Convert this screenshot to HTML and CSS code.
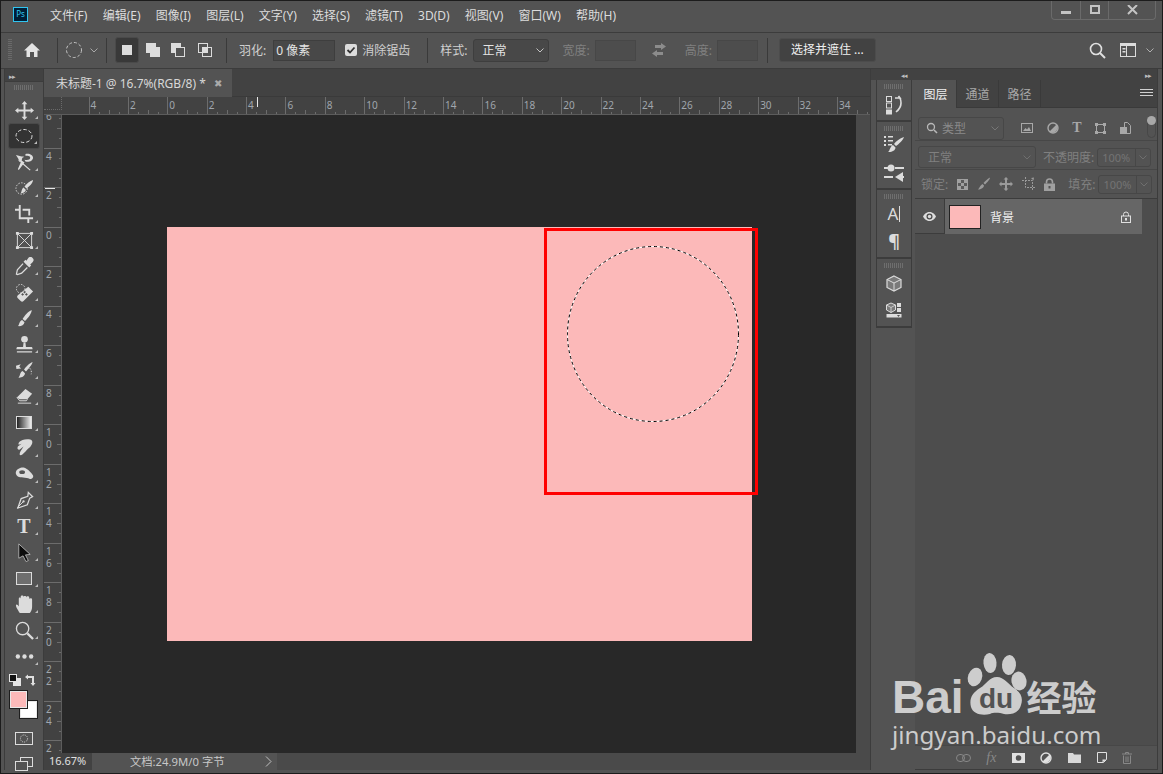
FILE: index.html
```html
<!DOCTYPE html>
<html lang="zh-CN">
<head>
  <meta charset="UTF-8">
  <meta name="viewport" content="width=device-width, initial-scale=1.0">
  <title>Photoshop</title>
  <link rel="stylesheet" href="styles.css">
</head>
<body>
  <div class="window">
    <!-- menu bar -->
    <header class="menubar">
      <div class="ps-logo">Ps</div>
      <nav class="menu">
        <span>文件(F)</span><span>编辑(E)</span><span>图像(I)</span><span>图层(L)</span><span>文字(Y)</span><span>选择(S)</span><span>滤镜(T)</span><span>3D(D)</span><span>视图(V)</span><span>窗口(W)</span><span>帮助(H)</span>
      </nav>
      <div class="win-controls">
        <span><svg width="10" height="10" viewBox="0 0 10 10"><rect y="6" width="10" height="3" fill="#c4c4c4"/></svg></span>
        <span><svg width="10" height="10" viewBox="0 0 10 10"><rect x="1" y="1" width="8" height="7" fill="none" stroke="#c4c4c4" stroke-width="2"/></svg></span>
        <span><svg width="11" height="10" viewBox="0 0 11 10"><path d="M1 0l9 9M10 0l-9 9" stroke="#c4c4c4" stroke-width="2"/></svg></span>
      </div>
    </header>

    <!-- options bar -->
    <div class="options">
      <div class="grip-v"></div>
      <svg class="ml-11" width="18" height="18" viewBox="0 0 18 18"><path d="M9 2l8 7.500h-2.500V16h-3.500v-5H7v5H3.500V9.500H1z" fill="#e4e4e4"/></svg>
      <div class="sep ml-16"></div>
      <svg class="ml-7" width="18" height="18" viewBox="0 0 18 18"><circle cx="9" cy="9" r="7.500" fill="none" stroke="#c4c4c4" stroke-dasharray="3 2"/></svg>
      <svg class="ml-6 chev" width="10" height="10" viewBox="0 0 10 10"><path d="M1.500 3.500L5 7l3.500-3.500" fill="none" stroke="#a8a8a8"/></svg>
      <div class="sep ml-7"></div>
      <div class="mode-active ml-8"><i></i></div>
      <svg class="ml-6" width="16" height="16" viewBox="0 0 16 16"><rect x="1" y="1" width="10" height="10" fill="#dcdcdc"/><rect x="5" y="5" width="10" height="10" fill="#dcdcdc"/></svg>
      <svg class="ml-9" width="16" height="16" viewBox="0 0 16 16"><rect x="1" y="1" width="10" height="10" fill="#dcdcdc"/><rect x="5.500" y="5.500" width="9" height="9" fill="#535353" stroke="#dcdcdc"/></svg>
      <svg class="ml-11" width="16" height="16" viewBox="0 0 16 16"><rect x="1.500" y="1.500" width="9" height="9" fill="none" stroke="#dcdcdc"/><rect x="5.500" y="5.500" width="9" height="9" fill="none" stroke="#dcdcdc"/><rect x="5" y="5" width="6" height="6" fill="#dcdcdc"/></svg>
      <div class="sep ml-13"></div>
      <span class="label ml-12">羽化:</span>
      <div class="field feather ml-7">0 像素</div>
      <div class="check ml-10"><svg width="10" height="10" viewBox="0 0 10 10"><path d="M1.500 5l2.500 2.500 4.500-5" fill="none" stroke="#333" stroke-width="1.800"/></svg></div>
      <span class="label ml-5">消除锯齿</span>
      <div class="sep ml-17"></div>
      <span class="label ml-12">样式:</span>
      <div class="select style-select ml-6">正常<svg width="10" height="10" viewBox="0 0 10 10"><path d="M1.500 3.500L5 7l3.500-3.500" fill="none" stroke="#c4c4c4"/></svg></div>
      <span class="label off ml-13">宽度:</span>
      <div class="field size ml-5"></div>
      <svg class="ml-14" width="18" height="16" viewBox="0 0 18 16"><path d="M11 1l5 3.500L11 8V6H5V3h6zM7 8v2h6v3H7v2l-5-3.500z" fill="#8c8c8c"/></svg>
      <span class="label off ml-17">高度:</span>
      <div class="field size ml-5"></div>
      <div class="sep ml-9"></div>
      <div class="refine ml-11">选择并遮住 ...</div>
      <div class="options-right">
        <svg width="17" height="17" viewBox="0 0 17 17"><circle cx="7" cy="7" r="5.500" fill="none" stroke="#e0e0e0" stroke-width="1.600"/><path d="M11 11l5 5" stroke="#e0e0e0" stroke-width="2"/></svg>
        <svg class="ml-14" width="16" height="14" viewBox="0 0 16 14"><rect x=".5" y=".5" width="15" height="13" fill="none" stroke="#dcdcdc"/><rect y="0" width="16" height="3" fill="#dcdcdc"/><rect x="2.500" y="5" width="3" height="1.500" fill="#dcdcdc"/><rect x="2.500" y="8" width="3" height="1.500" fill="#dcdcdc"/><path d="M6.500 3v10" stroke="#dcdcdc"/></svg>
        <svg class="ml-9" width="10" height="10" viewBox="0 0 10 10"><path d="M1.500 3.500L5 7l3.500-3.500" fill="none" stroke="#b0b0b0"/></svg>
      </div>
    </div>

    <div class="workspace">
      <!-- tool bar -->
      <aside class="tools">
        <div class="collapse-bar"><span class="arrows">▸▸</span></div>
        <div class="grip-h"></div>
        <div class="tool"><svg viewBox="0 0 20 20"><path d="M10 0l3 3.500h-2V9h5.500V7l3.500 3-3.500 3v-2H11v5.500h2L10 20l-3-3.500h2V11H3.500v2L0 10l3.500-3v2H9V3.500H7z"/></svg></div>
        <div class="tool active"><svg viewBox="0 0 20 20"><ellipse cx="10" cy="10" rx="8" ry="6.500" fill="none" stroke="currentColor" stroke-width="1" stroke-dasharray="3.500 2"/></svg></div>
        <div class="tool"><svg viewBox="0 0 20 20"><path d="M1 2l7 2-1 4 3 2-6 8-1-1 3-7z"/><path d="M11 1c4-1 8 1 8 4s-4 5-8 4l-1-2c3 1 6 0 6-2s-3-2-5-2z"/><path d="M9 4C5 5 3 7 5 9M8 11l8 7" fill="none" stroke="currentColor" stroke-width="1.200"/></svg></div>
        <div class="tool"><svg viewBox="0 0 20 20"><circle cx="7" cy="10" r="6" fill="none" stroke="currentColor" stroke-dasharray="1.500 1.500"/><path d="M19 1c0 3-4 7-7 9l-2-2c2-3 6-6 9-7zM9 9l2.500 2.500C11 14 8 15 6 15c1-1 1-5 3-6z"/></svg></div>
        <div class="tool"><svg viewBox="0 0 20 20"><path d="M4 0h2v13h13v2H15v4h-2v-4H4V6H0V4h4zM8 4h8v7h-2V6H8z"/></svg></div>
        <div class="tool"><svg viewBox="0 0 20 20"><rect x="2.500" y="2.500" width="15" height="15" fill="none" stroke="currentColor"/><path d="M2.500 2.500l15 15M17.500 2.500l-15 15" stroke="currentColor"/><path d="M1 1h3v3H1zM16 1h3v3h-3zM1 16h3v3H1zM16 16h3v3h-3z"/></svg></div>
        <div class="tool"><svg viewBox="0 0 20 20"><path d="M14 1a3 3 0 0 1 4.500 4.500L16 8l1 1-2 2-6-6 2-2 1 1z"/><path d="M8.500 7L2.500 13.500 1.500 18l1 .5 4.500-1.500L13 11" fill="none" stroke="currentColor" stroke-width="1.300"/></svg></div>
        <div class="tool"><svg viewBox="0 0 20 20"><path d="M14 4l5 5-10 10c-1 1-2 1-3 0l-3-3c-1-1-1-2 0-3zM10 8l-1.500 1.500L10 11l1.500-1.500zM8 10.500L6.500 12 8 13.500 9.500 12zM12 10.500L10.500 12 12 13.500l1.500-1.500z" fill-rule="evenodd"/><circle cx="6" cy="6" r="4.500" fill="none" stroke="currentColor" stroke-dasharray="1.500 1.500"/></svg></div>
        <div class="tool"><svg viewBox="0 0 20 20"><path d="M17.500 1c.5 3-4 9-7 11.500L8 10.500c2-3.500 6-8 9.500-9.500zM7.500 11.500l2.500 2.500c-.5 3-4 4.500-7 4 1.500-1 1.500-5.500 4.500-6.500z"/></svg></div>
        <div class="tool"><svg viewBox="0 0 20 20"><circle cx="10" cy="4.500" r="3.500"/><path d="M9 8h2l.5 4.500H17c1 0 1.500.5 1.500 2.500h-17c0-2 .5-2.500 1.500-2.500h5.500zM2 17h16v1.500H2z"/></svg></div>
        <div class="tool"><svg viewBox="0 0 20 20"><path d="M18.500 1c-.5 3-5 8-7 10l-2-2c2-3 6-7 9-8zM8 10.500l2.500 2.500c0 3-4 5-7 4.500 2-1 1.500-6 4.500-7z"/><path d="M1 5l5-1.500-1.500 2.500 2 2-5 .5"/><path d="M13 6c3 1 5 4 4 8" fill="none" stroke="currentColor" stroke-dasharray="1.500 1.500"/></svg></div>
        <div class="tool"><svg viewBox="0 0 20 20"><path d="M11 2l7 5-5 6H5L2 11z"/><path d="M2 11l3 3.500h7l1-1.500" fill="none" stroke="currentColor"/><path d="M3 17h14" stroke="currentColor"/></svg></div>
        <div class="tool"><div class="gradient-swatch"></div></div>
        <div class="tool"><svg viewBox="0 0 20 20"><path d="M8 1c3-1 9-1 10 1s-1 6-4 8c-2 2-6 7-8 7-2 0-1-3 1-6l2-3-4 3C3 12 2 10 3 8l4-3-3 1C3 4 5 2 8 1z"/></svg></div>
        <div class="tool"><svg viewBox="0 0 20 20"><path d="M1 7c1-3 6-5 9-4s7 5 9 8c1 3-3 5-5 3-2 0-5-1-7-1C3 13 0 10 1 7z"/><ellipse cx="7.500" cy="7.500" rx="3" ry="2" fill="#535353"/></svg></div>
        <div class="tool"><svg viewBox="0 0 20 20"><path d="M14 1.500l4.500 4.500-3 1.500-2.500 7-10 3.500 3.500-10 7-2.500z" fill="none" stroke="currentColor" stroke-width="1.300"/><path d="M2.500 17.500l6-6" stroke="currentColor"/><circle cx="9" cy="11" r="1.200"/></svg></div>
        <div class="tool"><span class="tool-type">T</span></div>
        <div class="tool"><svg viewBox="0 0 20 20"><path d="M4 1l12 11-5 .5 3 6-2.500 1-3-6L4 16z" fill="#0c0c0c" stroke="#dcdcdc" stroke-width=".7"/></svg></div>
        <div class="tool"><div class="rect-swatch"></div></div>
        <div class="tool"><svg viewBox="0 0 20 20"><path d="M5 19c-1-2-4-6-4-8s2-1 3 1V4c0-2 2-2 2 0V2c0-2 3-2 3 0v0c0-1.500 3-1.500 3 .5C12 1 15 1 15 3v1c1-1 3-1 3 1v7c0 4-2 7-3 7z"/></svg></div>
        <div class="tool"><svg viewBox="0 0 20 20"><circle cx="8" cy="8" r="6.500" fill="none" stroke="currentColor" stroke-width="1.400"/><path d="M13 13l6 6" stroke="currentColor" stroke-width="2.400"/></svg></div>
        <div class="tool"><svg viewBox="0 0 20 20"><circle cx="3" cy="10" r="2.300"/><circle cx="10" cy="10" r="2.300"/><circle cx="17" cy="10" r="2.300"/></svg></div>
        <div class="swap-row">
          <svg width="12" height="12" viewBox="0 0 12 12"><rect x="4" y="4" width="8" height="8" fill="#e4e4e4"/><rect x=".5" y=".5" width="7" height="7" fill="#111" stroke="#e4e4e4"/></svg>
          <svg width="12" height="12" viewBox="0 0 12 12"><path d="M1 3l3-2.500V2h6v7h1.500L9 12 6.500 9H8V4H4v1.500z" fill="#e0e0e0"/></svg>
        </div>
        <div class="colors">
          <div class="color-bg"></div>
          <div class="color-fg"></div>
        </div>
        <div class="quickmask"><svg width="18" height="13" viewBox="0 0 18 13"><circle cx="9" cy="6.500" r="4" fill="none" stroke="#dcdcdc" stroke-dasharray="1.200 1.200"/></svg></div>
        <svg class="screenmode" width="18" height="14" viewBox="0 0 18 14"><rect x="5.500" y=".5" width="12" height="9" fill="none" stroke="#dcdcdc"/><rect x=".5" y="4.500" width="12" height="9" fill="#535353" stroke="#dcdcdc"/></svg>
      </aside>

      <!-- document -->
      <section class="doc">
        <div class="doc-tabs">
          <div class="doc-tab">未标题-1 @ 16.7%(RGB/8) *<span class="tab-close">✖</span></div>
        </div>
        <div class="ruler-top">
          <div class="ruler-corner"></div>
          <div class="ruler-h">
            <span>4</span><span>2</span><span>0</span><span>2</span><span>4</span><span>6</span><span>8</span><span>10</span><span>12</span><span>14</span><span>16</span><span>18</span><span>20</span><span>22</span><span>24</span><span>26</span><span>28</span><span>30</span><span>32</span><span>34</span>
            <i class="cursor-h"></i>
          </div>
        </div>
        <div class="doc-mid">
          <div class="ruler-v">
            <span class="first">6</span><span>4</span><span>2</span><span>0</span><span>2</span><span>4</span><span>6</span><span>8</span><span>1<br>0</span><span>1<br>2</span><span>1<br>4</span><span>1<br>6</span><span>1<br>8</span><span>2<br>0</span><span>2<br>2</span><span>2<br>4</span><span>2</span>
            <i class="cursor-v"></i>
          </div>
          <div class="canvas">
            <div class="artboard">
              <svg class="ants" width="180" height="184" viewBox="0 0 180 184">
                <ellipse cx="90" cy="92" rx="85.500" ry="87.500" fill="none" stroke="#fff"/>
                <ellipse cx="90" cy="92" rx="85.500" ry="87.500" fill="none" stroke="#000" stroke-dasharray="3 3"/>
              </svg>
              <div class="red-box"></div>
            </div>
          </div>
          <div class="scroll-v"></div>
        </div>
        <div class="status">
          <div class="zoom-value">16.67%</div>
          <div class="doc-info">文档:24.9M/0 字节<svg width="7" height="11" viewBox="0 0 7 11"><path d="M1 .5L6 5.500 1 10.500" fill="none" stroke="#c0c0c0"/></svg></div>
          <div class="scroll-h"></div>
        </div>
      </section>

      <!-- collapsed panels -->
      <aside class="dock">
        <div class="dock-top"><span class="arrows">◂◂</span></div>
        <div class="dock-group history">
          <div class="grip-h"></div>
          <svg class="dock-icon" width="20" height="20" viewBox="0 0 20 20"><rect x="2.500" y="1.500" width="5" height="5" fill="none" stroke="#dcdcdc"/><rect x="2.500" y="8" width="5" height="5" fill="none" stroke="#dcdcdc"/><rect x="2" y="14.500" width="6" height="5" fill="#dcdcdc"/><path d="M11 3h5l-1.500-2M16 3c2 5 1 10-4 14" fill="none" stroke="#dcdcdc" stroke-width="1.600"/></svg>
        </div>
        <div class="dock-group brushes">
          <div class="grip-h"></div>
          <svg class="dock-icon" width="22" height="20" viewBox="0 0 22 20"><path d="M1 2h2v2H1zM5 2h5v1.500H5zM1 6h2v2H1zM5 6h5v1.500H5zM1 10h2v2H1zM5 10h4v1.500H5zM21 3c-1 3-5 7-8 9l-2-2c2-3 7-6 10-7zM10 11l2.500 2.500c0 3-4 5-7.500 4.500 2-1 2-6 5-7z" fill="#dcdcdc"/></svg>
          <svg class="dock-icon second" width="22" height="18" viewBox="0 0 22 18"><path d="M1 4h4M12 4h9M1 13h9M18 13h3" stroke="#dcdcdc" stroke-width="2"/><circle cx="8" cy="4" r="3.500" fill="#dcdcdc"/><path d="M20 8v10l-8-5z" fill="#dcdcdc"/></svg>
        </div>
        <div class="dock-group chars">
          <div class="grip-h"></div>
          <div class="char-a">A<i></i></div>
          <div class="char-p">¶</div>
        </div>
        <div class="dock-group threed">
          <div class="grip-h"></div>
          <svg class="dock-icon" width="16" height="17" viewBox="0 0 16 17"><path d="M8 1l7 3.500v8L8 16l-7-3.500v-8z" fill="#7a7a7a" stroke="#dcdcdc" stroke-width="1.200"/><path d="M1 4.500L8 8l7-3.500M8 8v8" fill="none" stroke="#dcdcdc"/></svg>
          <svg class="dock-icon second" width="16" height="16" viewBox="0 0 16 16"><path d="M5 1l4.500 2v5L5 10.500.5 8V3z" fill="#7a7a7a" stroke="#dcdcdc"/><path d="M.5 3L5 5.500 9.500 3M5 5.500v5" fill="none" stroke="#dcdcdc" stroke-width=".8"/><path d="M11 1h4v4h-4zM11 6h4v4h-4zM.500 12h15v3.500H.5z" fill="#dcdcdc"/><path d="M11 13h3l-1.500 2z" fill="#535353"/></svg>
        </div>
      </aside>

      <!-- layers panel -->
      <section class="panel">
        <div class="panel-top"><span class="arrows">▸▸</span></div>
        <div class="panel-tabs">
          <div class="panel-tab active">图层</div>
          <div class="panel-tab">通道</div>
          <div class="panel-tab">路径</div>
          <svg class="panel-menu" width="13" height="9" viewBox="0 0 13 9"><path d="M0 .5h13M0 3.500h13M0 6.500h13" stroke="#d0d0d0"/></svg>
        </div>
        <div class="panel-row filter-row">
          <div class="select kind-select">
            <svg width="12" height="12" viewBox="0 0 12 12"><circle cx="5" cy="5" r="3.500" fill="none" stroke="#b8b8b8" stroke-width="1.300"/><path d="M8 8l3 3" stroke="#b8b8b8" stroke-width="1.600"/></svg>
            <span>类型</span>
            <svg class="sel-chev" width="10" height="10" viewBox="0 0 10 10"><path d="M1.500 3.500L5 7l3.500-3.500" fill="none" stroke="#777"/></svg>
          </div>
          <div class="filter-icons">
            <svg width="12" height="10" viewBox="0 0 12 10"><rect x=".5" y=".5" width="11" height="9" fill="none" stroke="#a8a8a8"/><path d="M2 8l2.500-3 1.500 1.500L8 4l2 4z" fill="#a8a8a8"/></svg>
            <svg width="12" height="12" viewBox="0 0 12 12"><circle cx="6" cy="6" r="5" fill="none" stroke="#a8a8a8" stroke-width="1.400"/><path d="M9.500 2.500A5 5 0 0 1 2.500 9.500z" fill="#a8a8a8"/></svg>
            <span class="filter-t">T</span>
            <svg width="11" height="11" viewBox="0 0 11 11"><rect x="1.500" y="1.500" width="8" height="8" fill="none" stroke="#a8a8a8"/><path d="M0 0h3v3H0zM8 0h3v3H8zM0 8h3v3H0zM8 8h3v3H8z" fill="#a8a8a8"/></svg>
            <svg width="11" height="12" viewBox="0 0 11 12"><path d="M4.500.5h3l3 3v8h-6z" fill="none" stroke="#a8a8a8"/><rect x="0" y="5" width="7" height="7" fill="#a8a8a8"/></svg>
          </div>
          <div class="filter-toggle"><i></i></div>
        </div>
        <div class="panel-row blend-row">
          <div class="select blend-select">正常<svg width="10" height="10" viewBox="0 0 10 10"><path d="M1.500 3.500L5 7l3.500-3.500" fill="none" stroke="#6f6f6f"/></svg></div>
          <span class="plabel opacity-label">不透明度:</span>
          <div class="percent">100%<span><svg width="10" height="10" viewBox="0 0 10 10"><path d="M1.500 3.500L5 7l3.500-3.500" fill="none" stroke="#6f6f6f"/></svg></span></div>
        </div>
        <div class="panel-row lock-row">
          <span class="plabel">锁定:</span>
          <div class="lock-icons">
            <svg width="11" height="11" viewBox="0 0 11 11"><rect x=".5" y=".5" width="10" height="10" fill="#5a5a5a" stroke="#a0a0a0"/><path d="M1 1h3v3H1zM7 1h3v3H7zM4 4h3v3H4zM1 7h3v3H1zM7 7h3v3H7z" fill="#a0a0a0"/></svg>
            <svg width="14" height="14" viewBox="0 0 14 14"><path d="M13 .5c0 2-3 5-5 7L6.500 6C8 4 11 1.500 13 .5zM5.500 7L7 8.500c0 2-3 4-6 4C2.500 11.500 3 8 5.500 7z" fill="#9a9a9a"/></svg>
            <svg width="14" height="14" viewBox="0 0 14 14"><path d="M7 0l2.500 2.500H8V6h3.500V4.500L14 7l-2.500 2.500V8H8v3.500h1.500L7 14l-2.500-2.500H6V8H2.500v1.500L0 7l2.500-2.500V6H6V2.500H4.500z" fill="#9a9a9a"/></svg>
            <svg width="14" height="14" viewBox="0 0 14 14"><path d="M3.500 0v10.500H14M0 3.500h10.500V14" fill="none" stroke="#9a9a9a" stroke-dasharray="2 1"/><path d="M9 1l3-.5-.5 3z" fill="#9a9a9a"/></svg>
            <svg width="11" height="13" viewBox="0 0 11 13"><path d="M2.500 5.500V4a3 3 0 0 1 6 0v1.500" fill="none" stroke="#a0a0a0" stroke-width="1.600"/><path d="M0 5.500h11V13H0z" fill="#a0a0a0"/><rect x="4.500" y="8" width="2" height="2.500" fill="#535353"/></svg>
          </div>
          <span class="plabel fill-label">填充:</span>
          <div class="percent">100%<span><svg width="10" height="10" viewBox="0 0 10 10"><path d="M1.500 3.500L5 7l3.500-3.500" fill="none" stroke="#6f6f6f"/></svg></span></div>
        </div>
        <div class="layer">
          <div class="layer-eye"><svg width="13" height="9" viewBox="0 0 13 9"><path d="M6.500 0C10 0 12 2.500 13 4.500 12 6.500 10 9 6.500 9S1 6.500 0 4.500C1 2.500 3 0 6.500 0z" fill="#dcdcdc"/><circle cx="6.500" cy="4.500" r="3" fill="#4a4a4a"/><circle cx="6.500" cy="4.500" r="1.700" fill="#dcdcdc"/></svg></div>
          <div class="layer-main">
            <div class="layer-thumb"></div>
            <span class="layer-name">背景</span>
            <svg class="layer-lock" width="10" height="12" viewBox="0 0 10 12"><path d="M2.500 5V3.500a2.500 2.500 0 0 1 5 0V5" fill="none" stroke="#e0e0e0"/><rect x=".5" y="5" width="9" height="6.500" fill="none" stroke="#e0e0e0"/><rect x="4" y="7" width="2" height="2.500" fill="#e0e0e0"/></svg>
          </div>
        </div>
        <div class="panel-space"></div>
        <div class="panel-foot">
          <svg width="15" height="8" viewBox="0 0 15 8"><rect x=".5" y=".5" width="8" height="7" rx="3.500" fill="none" stroke="#888"/><rect x="6.500" y=".5" width="8" height="7" rx="3.500" fill="none" stroke="#888"/></svg>
          <span class="fx">fx</span>
          <svg width="13" height="10" viewBox="0 0 13 10"><rect width="13" height="10" fill="#e0e0e0"/><circle cx="6.500" cy="5" r="2.800" fill="#535353"/></svg>
          <svg width="13" height="12" viewBox="0 0 13 12"><circle cx="6" cy="6" r="5" fill="none" stroke="#e0e0e0" stroke-width="1.400"/><path d="M9.500 2.500A5 5 0 0 1 2.500 9.500z" fill="#e0e0e0"/></svg>
          <svg width="13" height="10" viewBox="0 0 13 10"><path d="M0 0h5l1 1.500h7V10H0z" fill="#d8d8d8"/></svg>
          <svg width="10" height="11" viewBox="0 0 10 11"><path d="M.5.5h9v7l-3 3h-6z" fill="none" stroke="#e0e0e0"/><path d="M5.500 10.500v-3h4z" fill="#e0e0e0"/></svg>
          <svg width="10" height="12" viewBox="0 0 10 12"><path d="M0 2h10M3.500 2V.5h3V2M1.500 3.500v8h7v-8M4 4.500v5.500M6 4.500v5.500" fill="none" stroke="#888"/></svg>
        </div>
      </section>
    </div>

    <!-- watermark -->
    <div class="watermark">
      <div class="wm-top">
        <span class="wm-bai">Bai</span>
        <svg class="wm-paw" width="66" height="68" viewBox="0 0 66 68">
          <ellipse cx="27" cy="13" rx="6.500" ry="10" transform="rotate(-5 27 13)"/>
          <ellipse cx="46" cy="15" rx="7" ry="10" transform="rotate(5 46 15)"/>
          <ellipse cx="12" cy="27" rx="7" ry="9.500" transform="rotate(20 12 27)"/>
          <ellipse cx="56" cy="31" rx="7.500" ry="9.500" transform="rotate(-10 56 31)"/>
          <path d="M34 27c7 0 11 7 17 11 8 5 9 11 7 17-2 8-10 10-17 9-4-1-10-2-14 0-8 2-17 0-19-7-2-8 1-14 9-19 7-4 9-11 17-11z"/>
          <text x="33" y="58" class="wm-du">du</text>
        </svg>
        <span class="wm-jy">经验</span>
      </div>
      <div class="wm-url">jingyan.baidu.com</div>
    </div>
  </div>
</body>
</html>
```

FILE: styles.css
```css
* {
  box-sizing: border-box;
}

body {
  margin: 0;
  background: #535353;
  font-family: "Noto Sans", "Noto Sans CJK SC", sans-serif;
  font-size: 12px;
  color: #dcdcdc;
}

.window {
  position: relative;
  width: 1163px;
  height: 774px;
  overflow: hidden;
  background: #535353;
  border: 1px solid #1c1c1c;
}

/* spacing helpers for the options bar */
.ml-5 { margin-left: 5px; }
.ml-6 { margin-left: 6px; }
.ml-7 { margin-left: 7px; }
.ml-8 { margin-left: 8px; }
.ml-9 { margin-left: 9px; }
.ml-10 { margin-left: 10px; }
.ml-11 { margin-left: 11px; }
.ml-12 { margin-left: 12px; }
.ml-13 { margin-left: 13px; }
.ml-14 { margin-left: 14px; }
.ml-16 { margin-left: 16px; }
.ml-17 { margin-left: 17px; }

/* menu bar */
.menubar {
  display: flex;
  align-items: flex-start;
  height: 31px;
  padding-left: 12px;
}

.ps-logo {
  width: 15px;
  height: 15px;
  margin-top: 6px;
  background: #001e36;
  border: 1px solid #31c5f0;
  color: #31c5f0;
  font-size: 8px;
  line-height: 12px;
  text-align: center;
}

.menu {
  display: flex;
  gap: 15.2px;
  margin-left: 22px;
  line-height: 30px;
}

.win-controls {
  display: flex;
  margin-left: auto;
  margin-right: 6px;
  height: 19px;
  border: 1px solid #6a6a6a;
  border-top: 0;
  border-radius: 0 0 4px 4px;
}

.win-controls span {
  display: flex;
  align-items: center;
  justify-content: center;
  width: 28px;
  border-left: 1px solid #6a6a6a;
}

.win-controls span:first-child {
  border-left: 0;
}

.win-controls span:last-child {
  width: 47px;
}

/* options bar */
.options {
  display: flex;
  align-items: center;
  height: 37px;
  padding-left: 7px;
  padding-bottom: 1px;
  border-top: 1px solid #3c3c3c;
  border-bottom: 1px solid #3c3c3c;
}

.options svg {
  flex: none;
}

.grip-v {
  width: 4px;
  height: 22px;
  background: repeating-linear-gradient(#6a6a6a 0 1px, transparent 1px 2px);
}

.sep {
  width: 1px;
  height: 25px;
  background: #3a3a3a;
}

.mode-active {
  display: flex;
  align-items: center;
  justify-content: center;
  width: 24px;
  height: 26px;
  background: #393939;
  border: 1px solid #4a4a4a;
  border-radius: 3px;
}

.mode-active i {
  width: 10px;
  height: 10px;
  background: #dcdcdc;
}

.label {
  white-space: nowrap;
  color: #d0d0d0;
}

.label.off {
  color: #808080;
}

.field {
  height: 21px;
  line-height: 19px;
  padding-left: 2px;
  background: #484848;
  border: 1px solid #3e3e3e;
  color: #e4e4e4;
}

.feather {
  width: 62px;
}

.size {
  width: 41px;
  background: #4d4d4d;
  border-color: #474747;
}

.check {
  display: flex;
  align-items: center;
  justify-content: center;
  width: 12px;
  height: 12px;
  background: #dcdcdc;
  border-radius: 2px;
}

.select {
  display: flex;
  align-items: center;
  justify-content: space-between;
  border: 1px solid #3e3e3e;
  border-radius: 3px;
}

.style-select {
  width: 76px;
  height: 23px;
  padding: 0 3px 0 8px;
  background: #484848;
  color: #e4e4e4;
}

.refine {
  width: 97px;
  height: 24px;
  background: #424242;
  border: 1px solid #4c4c4c;
  border-radius: 3px;
  line-height: 22px;
  text-align: center;
  color: #f0f0f0;
}

.options-right {
  display: flex;
  align-items: center;
  margin-left: 213px;
}

/* main area */
.workspace {
  display: flex;
  height: 701px;
  padding-left: 3px;
}

.arrows {
  font-size: 7px;
  letter-spacing: -1px;
  color: #bdbdbd;
}

.grip-h {
  width: 20px;
  height: 5px;
  margin: 0 auto;
  background: repeating-linear-gradient(90deg, #6e6e6e 0 1px, transparent 1px 2px);
}

/* tool bar */
.tools {
  width: 40px;
  flex: none;
  background: #535353;
  border-left: 1px solid #3c3c3c;
  border-right: 1px solid #3c3c3c;
}

.collapse-bar {
  height: 13px;
  padding-left: 4px;
  line-height: 12px;
  background: #424242;
  border-bottom: 1px solid #3c3c3c;
}

.tools .grip-h {
  margin: 3px auto 7px;
}

.tool {
  position: relative;
  display: flex;
  align-items: center;
  justify-content: center;
  height: 26px;
  color: #dcdcdc;
}

.tool svg {
  width: 19px;
  height: 19px;
  fill: currentColor;
}

.tool::after {
  content: "";
  position: absolute;
  right: 5px;
  bottom: 4px;
  border-style: solid;
  border-width: 0 0 3px 3px;
  border-color: transparent transparent #bcbcbc transparent;
}

.tool.active {
  margin: 0 3px;
  background: #333;
  border: 1px solid #4a4a4a;
  border-radius: 3px;
}

.tool.active::after {
  right: 2px;
}

.tool.active svg {
  width: 20px;
  height: 20px;
}

.gradient-swatch {
  width: 16px;
  height: 13px;
  background: linear-gradient(90deg, #222, #eee);
  border: 1px solid #dcdcdc;
}

.rect-swatch {
  width: 16px;
  height: 13px;
  background: #6e6e6e;
  border: 1px solid #dcdcdc;
}

.tool-type {
  font-family: "Liberation Serif", serif;
  font-weight: bold;
  font-size: 20px;
  line-height: 20px;
}

.swap-row {
  display: flex;
  justify-content: space-between;
  padding: 5px 7px 0 4px;
  height: 18px;
}

.colors {
  position: relative;
  height: 32px;
  margin-top: 3px;
}

.color-fg,
.color-bg {
  position: absolute;
  width: 19px;
  height: 19px;
  border: 1px solid #1e1e1e;
  outline: 1px solid #e8e8e8;
  outline-offset: -2px;
}

.color-fg {
  left: 4px;
  top: 0;
  background: #fcb9b9;
}

.color-bg {
  left: 14px;
  top: 10px;
  background: #fff;
}

.quickmask {
  display: flex;
  align-items: center;
  justify-content: center;
  width: 18px;
  height: 13px;
  margin: 10px 0 0 10px;
  background: #535353;
  border: 1px solid #dcdcdc;
}

.screenmode {
  display: block;
  margin: 12px 0 0 10px;
}

/* document */
.doc {
  display: flex;
  flex-direction: column;
  width: 826px;
  flex: none;
}

.doc-tabs {
  height: 28px;
  background: #424242;
  border-bottom: 1px solid #3a3a3a;
}

.doc-tab {
  display: flex;
  align-items: center;
  width: 188px;
  height: 28px;
  padding-left: 12px;
  background: #535353;
  color: #d8d8d8;
  white-space: nowrap;
}

.tab-close {
  margin-left: 8px;
  font-size: 10px;
  color: #aaa;
}

.ruler-top {
  display: flex;
  height: 18px;
  background: #424242;
  border-bottom: 1px solid #5c5c5c;
}

.ruler-corner {
  width: 18px;
  flex: none;
  border-right: 1px dotted #6a6a6a;
  border-bottom: 1px dotted #6a6a6a;
  margin-bottom: 4px;
}

.ruler-h {
  position: relative;
  display: flex;
  flex: 1;
  padding-left: 26.5px;
  overflow: hidden;
}

.ruler-h span {
  flex: none;
  width: 39.4px;
  padding: 2px 0 0 1px;
  font-size: 10px;
  line-height: 12px;
  color: #a0a6ad;
  border-left: 1px solid #6c6c6c;
  background:
    linear-gradient(#6c6c6c, #6c6c6c) 9px 100% / 1px 2px no-repeat,
    linear-gradient(#6c6c6c, #6c6c6c) 19px 100% / 1px 4px no-repeat,
    linear-gradient(#6c6c6c, #6c6c6c) 29px 100% / 1px 2px no-repeat;
}

.cursor-h {
  position: absolute;
  left: 195px;
  top: 0;
  width: 1px;
  height: 10px;
  background: #e8e8e8;
}

.doc-mid {
  display: flex;
  height: 638px;
}

.ruler-v {
  position: relative;
  width: 18px;
  flex: none;
  background: #424242;
  border-right: 1px solid #5c5c5c;
  overflow: hidden;
}

.ruler-v span {
  display: block;
  height: 39.5px;
  padding: 1px 0 0 2px;
  font-size: 10px;
  line-height: 12px;
  color: #a0a6ad;
  border-top: 1px solid #6c6c6c;
  background:
    linear-gradient(#6c6c6c, #6c6c6c) 100% 9px / 2px 1px no-repeat,
    linear-gradient(#6c6c6c, #6c6c6c) 100% 19px / 4px 1px no-repeat,
    linear-gradient(#6c6c6c, #6c6c6c) 100% 29px / 2px 1px no-repeat;
}

.ruler-v .first {
  margin-top: -7px;
}

.cursor-v {
  position: absolute;
  left: 1px;
  top: 73px;
  width: 10px;
  height: 1px;
  background: #e8e8e8;
}

.canvas {
  flex: 1;
  padding: 112px 0 0 105px;
  background: #282828;
}

.artboard {
  position: relative;
  width: 585px;
  height: 414px;
  background: #fcb9b9;
}

.ants {
  position: absolute;
  left: 396px;
  top: 15px;
}

.red-box {
  position: absolute;
  left: 377px;
  top: 1px;
  width: 214px;
  height: 267px;
  border: 3px solid #f00;
}

.scroll-v {
  width: 14px;
  flex: none;
  background: #4a4a4a;
}

.status {
  display: flex;
  height: 17px;
  line-height: 16px;
}

.zoom-value {
  width: 48px;
  flex: none;
  padding-left: 5px;
  background: #424242;
  color: #e0e0e0;
  font-size: 11px;
}

.doc-info {
  display: flex;
  align-items: center;
  width: 185px;
  flex: none;
  padding-left: 38px;
  font-size: 11.3px;
  background: #535353;
  color: #c8c8c8;
  white-space: nowrap;
}

.doc-info svg {
  margin-left: 41px;
}

.scroll-h {
  flex: 1;
  background: #4a4a4a;
}

/* dock */
.dock {
  width: 45px;
  flex: none;
  padding: 0 3px 0 5px;
  border-left: 1px solid #3c3c3c;
}

.dock-top {
  height: 11px;
  padding-right: 8px;
  line-height: 10px;
  margin: 0 -3px 0 -5px;
  text-align: right;
  background: #424242;
}

.dock-group {
  height: 42px;
  padding-top: 4px;
  border: 1px solid #3c3c3c;
  border-width: 0 1px 2px 1px;
}

.dock-icon {
  display: block;
  margin: 6px auto 0;
}

.dock-icon.second {
  margin-top: 10px;
}

.brushes {
  height: 68px;
}

.brushes .dock-icon:not(.second) {
  margin-top: 3px;
}

.chars {
  height: 69px;
}

.threed {
  height: 69px;
}

.threed .dock-icon:not(.second) {
  margin-top: 7px;
}

.char-a {
  margin-top: 4px;
  font-size: 17px;
  line-height: 22px;
  text-align: center;
  color: #dcdcdc;
}

.char-a i {
  display: inline-block;
  width: 1px;
  height: 16px;
  margin-left: 1px;
  background: #dcdcdc;
  vertical-align: -2px;
}

.char-p {
  margin-top: 4px;
  font-size: 18px;
  line-height: 24px;
  font-weight: bold;
  text-align: center;
  color: #dcdcdc;
}

/* layers panel */
.panel {
  display: flex;
  flex-direction: column;
  width: 243px;
  flex: none;
  border-right: 1px solid #3c3c3c;
}

.panel-top {
  height: 11px;
  padding-right: 6px;
  line-height: 10px;
  text-align: right;
  background: #424242;
}

.panel-tabs {
  display: flex;
  align-items: center;
  height: 28px;
  background: #424242;
  border-bottom: 1px solid #3a3a3a;
}

.panel-tab {
  width: 42px;
  height: 28px;
  line-height: 29px;
  text-align: center;
  color: #a8a8a8;
  border-right: 1px solid #3a3a3a;
}

.panel-tab.active {
  background: #535353;
  color: #f0f0f0;
}

.panel-menu {
  margin-left: auto;
  margin-right: 4px;
}

.panel-row {
  display: flex;
  align-items: center;
  border-bottom: 1px solid #474747;
  padding-left: 3px;
}

.filter-row {
  height: 33px;
  padding-top: 8px;
}

.kind-select {
  width: 86px;
  height: 23px;
  padding: 0 3px 0 7px;
  gap: 4px;
  justify-content: flex-start;
  border-color: #474747;
  color: #8a8a8a;
}

.sel-chev {
  margin-left: auto;
}

.filter-icons {
  display: flex;
  align-items: center;
  justify-content: space-between;
  width: 110px;
  margin-left: 17px;
}

.filter-t {
  font-family: "Liberation Serif", serif;
  font-weight: bold;
  font-size: 14px;
  line-height: 14px;
  color: #a8a8a8;
}

.filter-toggle {
  position: relative;
  width: 9px;
  height: 20px;
  margin-left: 16px;
  border: 1px solid #474747;
  border-radius: 5px;
}

.filter-toggle i {
  position: absolute;
  left: -1px;
  top: -3px;
  width: 9px;
  height: 9px;
  border-radius: 50%;
  background: #a8a8a8;
}

.blend-row {
  height: 29px;
  padding-top: 4px;
}

.blend-select {
  width: 118px;
  height: 22px;
  padding: 0 3px 0 9px;
  border-color: #474747;
  color: #808080;
}

.plabel {
  color: #808080;
  white-space: nowrap;
}

.opacity-label {
  margin-left: 7px;
}

.percent {
  display: flex;
  align-items: center;
  justify-content: space-between;
  width: 54px;
  height: 19px;
  margin-left: 3px;
  padding-left: 4px;
  font-size: 11px;
  color: #747474;
  border: 1px solid #474747;
  border-radius: 3px;
}

.percent span {
  display: flex;
  align-items: center;
  justify-content: center;
  width: 15px;
  height: 17px;
  border-left: 1px solid #474747;
}

.lock-row {
  height: 29px;
  padding-left: 6px;
  border-bottom-color: #3c3c3c;
}

.lock-icons {
  display: flex;
  align-items: center;
  justify-content: space-between;
  width: 98px;
  margin-left: 9px;
}

.fill-label {
  margin-left: 13px;
}

.layer {
  display: flex;
  height: 35px;
  background: #4d4d4d;
}

.layer-eye {
  display: flex;
  align-items: center;
  justify-content: center;
  width: 30px;
  background: #535353;
  border-right: 1px solid #3c3c3c;
  border-bottom: 1px solid #3c3c3c;
}

.layer-main {
  display: flex;
  align-items: center;
  width: 197px;
  padding-left: 4px;
  background: #666;
}

.layer-thumb {
  width: 32px;
  height: 24px;
  background: #fcb9b9;
  border: 1px solid #222;
}

.layer-name {
  margin-left: 9px;
  color: #f0f0f0;
}

.layer-lock {
  margin-left: 107px;
}

.panel-space {
  flex: 1;
  background: #4d4d4d;
}

.panel-foot {
  display: flex;
  align-items: center;
  justify-content: space-between;
  height: 25px;
  padding: 0 25px 0 41px;
  background: #535353;
  border-top: 1px solid #474747;
  border-bottom: 1px solid #3c3c3c;
}

.fx {
  font-family: "Liberation Serif", serif;
  font-style: italic;
  font-size: 14px;
  color: #888;
}

/* watermark */
.watermark {
  position: absolute;
  left: 891px;
  top: 649px;
  width: 212px;
  color: rgba(255, 255, 255, 0.72);
}

.wm-top {
  display: flex;
  align-items: flex-end;
  height: 68px;
}

.wm-bai {
  font-family: "Liberation Sans", sans-serif;
  font-weight: bold;
  font-size: 46px;
  line-height: 50px;
  margin-bottom: -4px;
}

.wm-paw {
  flex: none;
  margin-left: -1px;
  fill: rgba(255, 255, 255, 0.72);
}

.wm-du {
  font-family: "Liberation Sans", sans-serif;
  font-weight: bold;
  font-size: 28px;
  text-anchor: middle;
  fill: #535353;
}

.wm-jy {
  font-family: "Noto Sans CJK SC", sans-serif;
  font-weight: bold;
  font-size: 35px;
  line-height: 44px;
  margin-left: -2px;
}

.wm-url {
  margin-top: 1px;
  font-size: 24.2px;
  line-height: 32px;
  white-space: nowrap;
}
```
